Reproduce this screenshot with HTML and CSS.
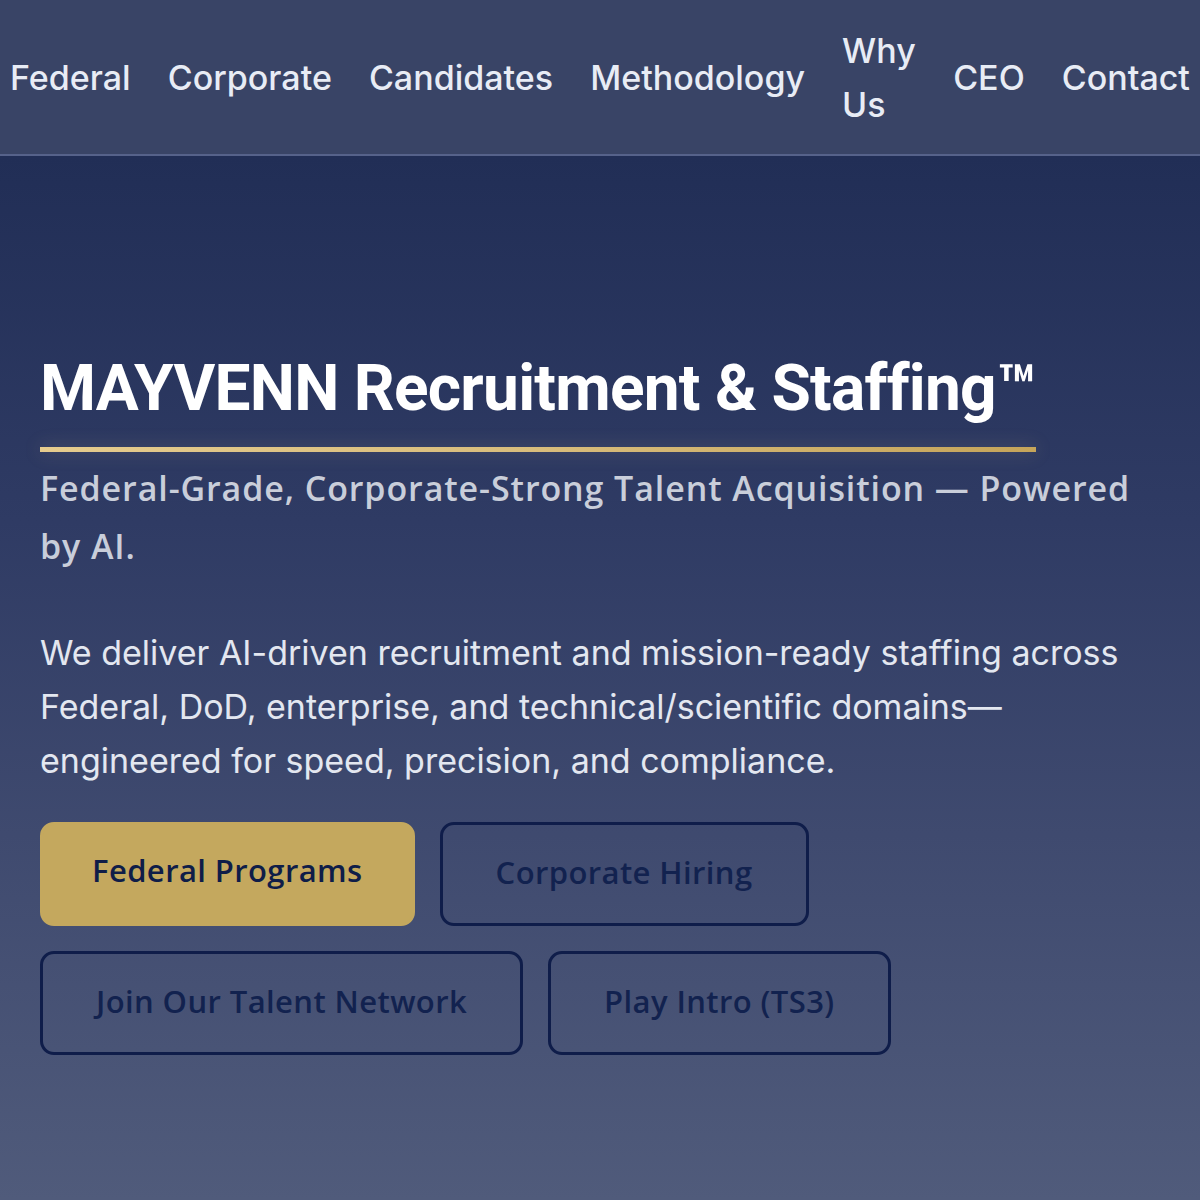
FILE: index.html
```html
<!DOCTYPE html>
<html lang="en">
<head>
<meta charset="utf-8">
<title>MAYVENN Recruitment &amp; Staffing</title>
<link rel="stylesheet" href="styles.css">
</head>
<body>
<header class="topbar">
  <nav class="nav">
    <a class="nav-link" href="#">Federal</a>
    <a class="nav-link" href="#">Corporate</a>
    <a class="nav-link" href="#">Candidates</a>
    <a class="nav-link" href="#">Methodology</a>
    <a class="nav-link nav-link-wrap" href="#">Why Us</a>
    <a class="nav-link" href="#">CEO</a>
    <a class="nav-link" href="#">Contact</a>
  </nav>
</header>
<main class="hero">
  <div class="hero-inner">
    <h1 class="hero-title">MAYVENN Recruitment &amp; Staffing™</h1>
    <p class="hero-tagline">Federal-Grade, Corporate-Strong Talent Acquisition — Powered by AI.</p>
    <p class="hero-copy">We deliver AI-driven recruitment and mission-ready staffing across Federal, DoD, enterprise, and technical/scientific domains—engineered for speed, precision, and compliance.</p>
    <div class="actions">
      <a class="btn btn-gold" href="#">Federal Programs</a>
      <a class="btn btn-outline" href="#">Corporate Hiring</a>
      <a class="btn btn-outline" href="#">Join Our Talent Network</a>
      <a class="btn btn-outline" href="#">Play Intro (TS3)</a>
    </div>
  </div>
</main>
</body>
</html>
```
FILE: styles.css
```css
* { box-sizing: border-box; }
html, body { margin: 0; padding: 0; }
body {
  background: #4f5a7b;
  font-family: Inter, "Noto Sans", sans-serif;
  min-height: 1200px;
}
.topbar {
  background: #394466;
  border-bottom: 2px solid #56628a;
}
.nav {
  display: flex;
  align-items: center;
  justify-content: space-between;
  padding: 24px 10px 22px 10px;
}
.nav-link {
  color: #e8ecf5;
  text-decoration: none;
  font-size: 34px;
  font-weight: 500;
  line-height: 54px;
  white-space: nowrap;
}
.nav-link-wrap {
  white-space: normal;
  width: 74px;
}
.hero {
  background: linear-gradient(180deg, #212e56 0%, #2f3b64 35%, #3f4a6f 65%, #505b7b 100%);
  min-height: 1044px;
  padding: 195px 40px 80px 40px;
}
.hero-title {
  display: inline-block;
  margin: 0;
  font-family: Roboto, "Liberation Sans", sans-serif;
  font-weight: 700;
  font-size: 64px;
  line-height: 76px;
  color: #ffffff;
  letter-spacing: -0.75px;
}
.hero-title::after {
  content: "";
  display: block;
  height: 5px;
  margin-top: 20px;
  background: linear-gradient(90deg, #e6cc8e 0%, #d9bd7c 50%, #c6a55a 100%);
  box-shadow: 0 0 18px rgba(230, 204, 142, 0.25);
}
.hero-tagline {
  margin: 7px 0 0 0;
  font-family: "Open Sans", "Noto Sans", sans-serif;
  font-weight: 600;
  font-size: 34px;
  line-height: 58px;
  letter-spacing: 0.9px;
  color: #c9ceda;
  max-width: 1110px;
}
.hero-copy {
  margin: 51px 0 0 0;
  font-family: Inter, "Noto Sans", sans-serif;
  font-size: 34px;
  line-height: 54px;
  color: #e3e7f0;
  font-weight: 400;
}
.actions {
  display: flex;
  flex-wrap: wrap;
  gap: 25px 25px;
  margin-top: 34px;
  max-width: 900px;
}
.btn {
  display: inline-flex;
  align-items: center;
  justify-content: center;
  height: 104px;
  padding: 0 53px 4px 53px;
  border: 3px solid #0f1d4a;
  border-radius: 14px;
  font-family: "Open Sans", "Noto Sans", sans-serif;
  font-weight: 600;
  font-size: 31px;
  letter-spacing: 0.4px;
  color: #12224f;
  text-decoration: none;
}
.btn-gold {
  background: #c4a85e;
  border-color: #c4a85e;
  padding: 0 49px 9px 49px;
  color: #0f1d48;
}
.btn-outline {
  background: transparent;
}
```
